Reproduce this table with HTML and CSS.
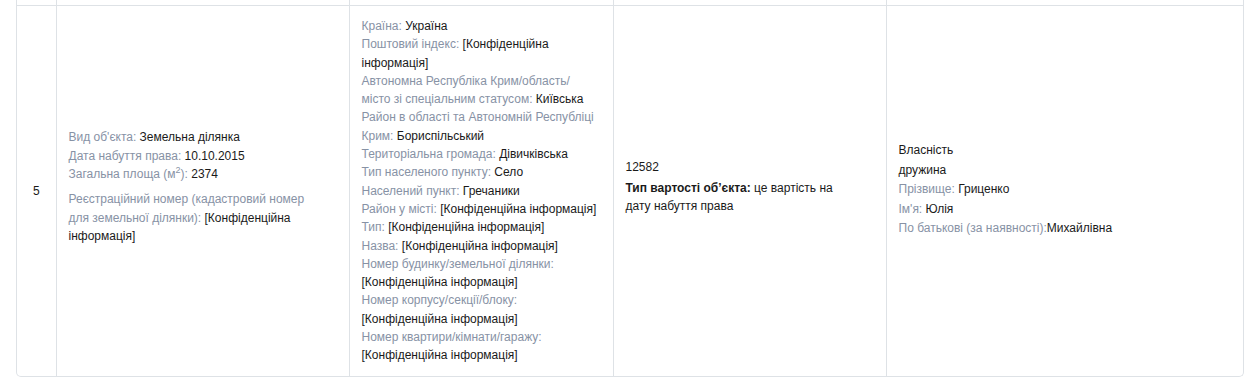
FILE: index.html
```html
<!DOCTYPE html>
<html lang="uk">
<head>
<meta charset="utf-8">
<link rel="stylesheet" href="styles.css">
</head>
<body>
<div class="wrap">
  <table class="tbl">
    <colgroup>
      <col class="c1"><col class="c2"><col class="c3"><col class="c4"><col class="c5">
    </colgroup>
    <tr class="prev"><td></td><td></td><td></td><td></td><td></td></tr>
    <tr class="row">
      <td class="num">5</td>
      <td class="obj">
        <div><span class="lbl">Вид об'єкта:</span> Земельна ділянка</div>
        <div><span class="lbl">Дата набуття права:</span> 10.10.2015</div>
        <div><span class="lbl">Загальна площа (м<sup>2</sup>):</span> 2374</div>
        <div class="reg"><span class="lbl">Реєстраційний номер (кадастровий номер для земельної ділянки):</span> [Конфіденційна інформація]</div>
      </td>
      <td class="addr">
        <div><span class="lbl">Країна:</span> Україна</div>
        <div><span class="lbl">Поштовий індекс:</span> [Конфіденційна інформація]</div>
        <div><span class="lbl">Автономна Республіка Крим/область/ місто зі спеціальним статусом:</span> Київська</div>
        <div><span class="lbl">Район в області та Автономній Республіці Крим:</span> Бориспільський</div>
        <div><span class="lbl">Територіальна громада:</span> Дівичківська</div>
        <div><span class="lbl">Тип населеного пункту:</span> Село</div>
        <div><span class="lbl">Населений пункт:</span> Гречаники</div>
        <div><span class="lbl">Район у місті:</span> [Конфіденційна інформація]</div>
        <div><span class="lbl">Тип:</span> [Конфіденційна інформація]</div>
        <div><span class="lbl">Назва:</span> [Конфіденційна інформація]</div>
        <div><span class="lbl">Номер будинку/земельної ділянки:</span> [Конфіденційна інформація]</div>
        <div><span class="lbl">Номер корпусу/секції/блоку:</span> [Конфіденційна інформація]</div>
        <div><span class="lbl">Номер квартири/кімнати/гаражу:</span> [Конфіденційна інформація]</div>
      </td>
      <td class="cost">
        <div>12582</div>
        <div class="ctype"><b>Тип вартості об’єкта:</b> це вартість на дату набуття права</div>
      </td>
      <td class="own">
        <div>Власність</div>
        <div>дружина</div>
        <div><span class="lbl">Прізвище:</span> Гриценко</div>
        <div><span class="lbl">Ім'я:</span> Юлія</div>
        <div><span class="lbl">По батькові (за наявності):</span>Михайлівна</div>
      </td>
    </tr>
  </table>
</div>
</body>
</html>
```
FILE: styles.css
```css
html, body {
  margin: 0;
  padding: 0;
  background: #ffffff;
}
body {
  font-family: "Liberation Sans", Arial, sans-serif;
  font-size: 12px;
  line-height: 18.3px;
  color: #1a1a1a;
}
.wrap {
  margin-left: 16px;
  width: 1228px;
  box-sizing: border-box;
  border: 1px solid #dee2e6;
  border-top: none;
  border-radius: 0 0 5px 5px;
  overflow: hidden;
}
.tbl {
  width: 1226px;
  table-layout: fixed;
  border-collapse: collapse;
}
.c1 { width: 39px; }
.c2 { width: 293px; }
.c3 { width: 264px; }
.c4 { width: 273px; }
.c5 { width: 357px; }
.tbl td {
  border-right: 1px solid #dee2e6;
  padding: 11px 12px;
  vertical-align: middle;
  word-wrap: break-word;
}
.tbl td:last-child { border-right: none; }
.prev td {
  height: 5px;
  padding: 0;
  border-bottom: 1px solid #dee2e6;
}
.row td { height: 369px; box-sizing: border-box; }
.num { text-align: center; padding: 0 !important; }
.tbl td.obj { padding: 11px 30px 19px 12px; }
.tbl td.cost { padding: 11px 30px 19px 12px; }
.tbl td.own { padding: 11px 12px 13px 12px; }
.ctype { margin-top: 2px; }
.lbl { color: #8792a5; }
sup { font-size: 9px; line-height: 0; }
.reg { margin-top: 7px; }
.own div { line-height: 19.5px; }
```
